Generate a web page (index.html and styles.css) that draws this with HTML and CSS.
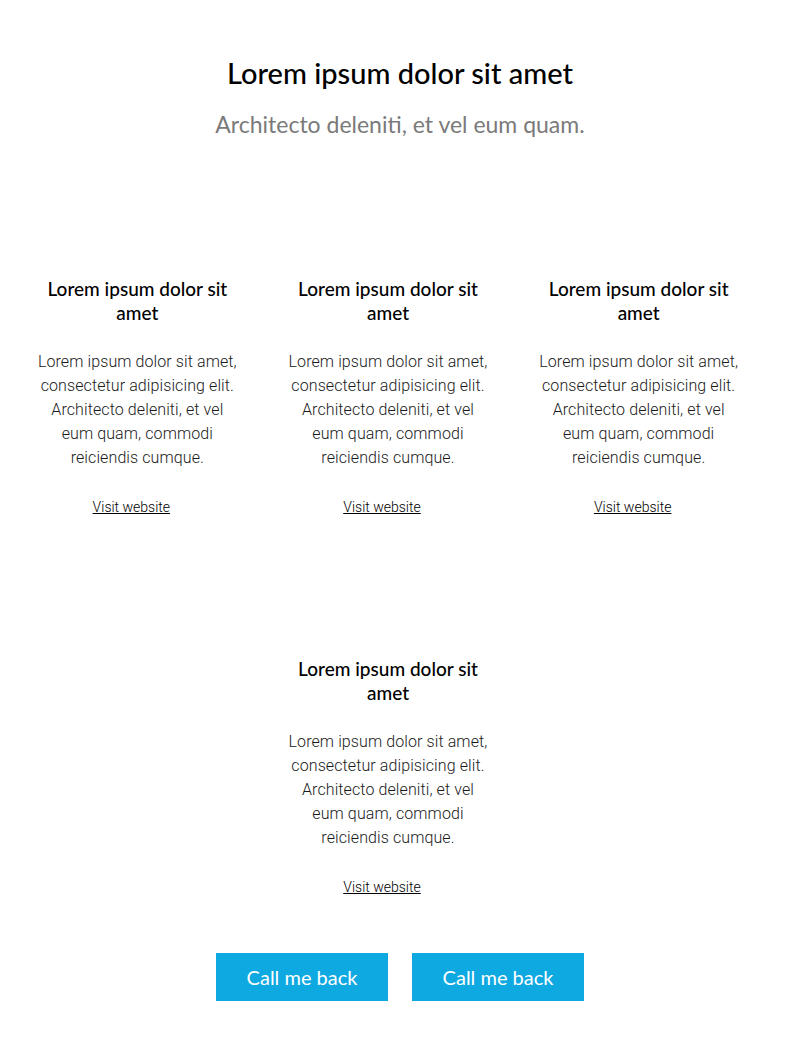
FILE: index.html
```html
<!DOCTYPE html>
<html>
<head>
<meta charset="utf-8">
<link rel="stylesheet" href="styles.css">
</head>
<body>
<div class="page">
  <header class="intro">
    <h1 class="title">Lorem ipsum dolor sit amet</h1>
    <p class="subtitle">Architecto deleniti, et vel eum quam.</p>
  </header>
  <section class="cards">
    <article class="card">
      <h2 class="card-title">Lorem ipsum dolor sit amet</h2>
      <p class="card-text">Lorem ipsum dolor sit amet, consectetur adipisicing elit. Architecto deleniti, et vel eum quam, commodi reiciendis cumque.</p>
      <a class="card-link" href="#">Visit website</a>
    </article>
    <article class="card">
      <h2 class="card-title">Lorem ipsum dolor sit amet</h2>
      <p class="card-text">Lorem ipsum dolor sit amet, consectetur adipisicing elit. Architecto deleniti, et vel eum quam, commodi reiciendis cumque.</p>
      <a class="card-link" href="#">Visit website</a>
    </article>
    <article class="card">
      <h2 class="card-title">Lorem ipsum dolor sit amet</h2>
      <p class="card-text">Lorem ipsum dolor sit amet, consectetur adipisicing elit. Architecto deleniti, et vel eum quam, commodi reiciendis cumque.</p>
      <a class="card-link" href="#">Visit website</a>
    </article>
    <article class="card">
      <h2 class="card-title">Lorem ipsum dolor sit amet</h2>
      <p class="card-text">Lorem ipsum dolor sit amet, consectetur adipisicing elit. Architecto deleniti, et vel eum quam, commodi reiciendis cumque.</p>
      <a class="card-link" href="#">Visit website</a>
    </article>
  </section>
  <div class="actions">
    <a class="btn" href="#">Call me back</a>
    <a class="btn" href="#">Call me back</a>
  </div>
</div>
</body>
</html>
```
FILE: styles.css
```css
* { box-sizing: border-box; }
html, body { margin: 0; padding: 0; background: #fff; }
body { font-family: "Lato", "Liberation Sans", sans-serif; color: #000; }
.intro { text-align: center; padding-top: 55px; }
.title { margin: 0; font-size: 29px; line-height: 36px; font-weight: 500; }
.subtitle { margin: 18px 0 0; font-size: 23px; line-height: 30px; color: #7a7a7a; font-weight: 400; }
.cards { display: flex; flex-wrap: wrap; justify-content: center; row-gap: 141px; margin: 138px 36px 0 12px; }
.card { flex: 0 0 33.3333%; padding: 0 24px; text-align: center; display: flex; flex-direction: column; align-items: center; }
.card-title { margin: 0; font-size: 19px; line-height: 24px; font-weight: 500; }
.card-text { margin: 25px 0 0; font-family: "Roboto", "Liberation Sans", sans-serif; font-weight: 300; font-size: 16px; letter-spacing: 0.1px; line-height: 24px; color: #1a1a1a; }
.card-link { margin-top: 28px; margin-right: 12px; font-family: "Roboto", "Liberation Sans", sans-serif; font-weight: 300; font-size: 14px; line-height: 18px; color: #000; text-decoration: underline; }
.actions { display: flex; justify-content: center; gap: 24px; margin-top: 57px; }
.btn { display: flex; align-items: center; justify-content: center; width: 172px; height: 48px; background: #0ea9e1; color: #fff; text-decoration: none; font-size: 20px; font-weight: 400; }
```
